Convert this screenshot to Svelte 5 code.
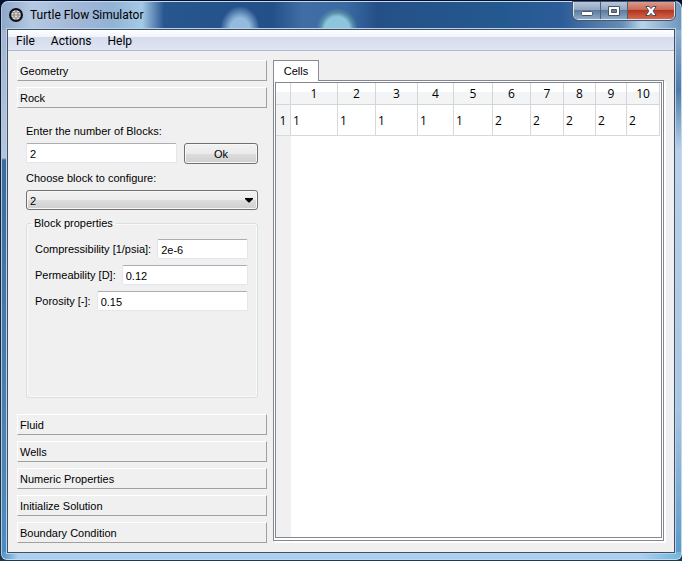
<script>
  let blockCount = $state('2');
  let selected = $state('2');
  let compressibility = $state('2e-6');
  let permeability = $state('0.12');
  let porosity = $state('0.15');
  let open = $state('Rock');

  const before = ['Geometry', 'Rock'];
  const after = ['Fluid', 'Wells', 'Numeric Properties', 'Initialize Solution', 'Boundary Condition'];
  const columns = [
    { width: 47, value: 1 },
    { width: 38, value: 1 },
    { width: 42, value: 1 },
    { width: 36, value: 1 },
    { width: 39, value: 1 },
    { width: 38, value: 2 },
    { width: 33, value: 2 },
    { width: 32, value: 2 },
    { width: 31, value: 2 },
    { width: 33, value: 2 }
  ];
</script>

<div class="desktop">
  <div class="window">
    <header class="titlebar">
      <svg class="logo" viewBox="0 0 14 14" aria-hidden="true">
        <circle cx="7" cy="7" r="7" fill="#111" />
        <circle cx="7" cy="7" r="4.8" fill="#ddd" />
        <path d="M5 4.8 7 3.8 9 4.8V8.8L7 10.2 5 8.8ZM5 4.8 3 4M9 4.8 11 4M5 8.8 3 10M9 8.8 11 10M2 7H12M7 2V4M7 10V12" fill="none" stroke="#555" stroke-width=".6" />
      </svg>
      <h1>Turtle Flow Simulator</h1>
      <div class="caption">
        <button class="min" aria-label="Minimize">
          <svg width="14" height="14" viewBox="0 0 14 14"><rect x="1.5" y="7.5" width="11" height="4" rx="1" fill="#fff" stroke="#4c5365" /></svg>
        </button>
        <button class="max" aria-label="Maximize">
          <svg width="14" height="14" viewBox="0 0 14 14"><path d="M1.5 2.5H12.5V11.5H1.5ZM4.500 5.500H9.500V8.500H4.500Z" fill="#fff" fill-rule="evenodd" stroke="#4c5365" /></svg>
        </button>
        <button class="close" aria-label="Close">
          <svg width="14" height="14" viewBox="0 0 14 14"><path d="M1.800 2.500H5.200L7 4.600 8.800 2.500H12.200L9.100 7 12.200 11.500H8.800L7 9.400 5.200 11.500H1.800L4.900 7Z" fill="#fff" stroke="#4e4d5f" /></svg>
        </button>
      </div>
    </header>

    <div class="client">
      <nav class="menu">
        <button>File</button>
        <button>Actions</button>
        <button>Help</button>
      </nav>

      <main>
        <section class="toolbox">
          {#each before as name}
            <button class="item" onclick={() => (open = name)}>{name}</button>
          {/each}

          <div class="page">
            <label for="count">Enter the number of Blocks:</label>
            <div class="count">
              <input id="count" type="text" bind:value={blockCount} />
              <button class="ok">Ok</button>
            </div>
            <label for="block">Choose block to configure:</label>
            <div class="combo">
              <select id="block" bind:value={selected}>
                <option value="1">1</option>
                <option value="2">2</option>
              </select>
              <svg width="8" height="5" viewBox="0 0 8 5" aria-hidden="true"><path d="M0 0H8V1L4.500 4.500H3.500L0 1Z" fill="#000" /></svg>
            </div>
            <fieldset>
              <legend>Block properties</legend>
              <div class="prop">
                <label for="comp">Compressibility [1/psia]:</label>
                <input id="comp" type="text" bind:value={compressibility} />
              </div>
              <div class="prop">
                <label for="perm">Permeability [D]:</label>
                <input id="perm" type="text" bind:value={permeability} />
              </div>
              <div class="prop">
                <label for="poro">Porosity [-]:</label>
                <input id="poro" type="text" bind:value={porosity} />
              </div>
            </fieldset>
          </div>

          {#each after as name}
            <button class="item" onclick={() => (open = name)}>{name}</button>
          {/each}
        </section>

        <section class="tabs">
          <div role="tablist">
            <button class="tab" role="tab" aria-selected="true">Cells</button>
          </div>
          <div class="pane" role="tabpanel">
            <div class="grid">
              <table>
                <colgroup>
                  <col style:width="15px" />
                  {#each columns as column}
                    <col style:width="{column.width}px" />
                  {/each}
                </colgroup>
                <thead>
                  <tr>
                    <th></th>
                    {#each columns as _, i}
                      <th scope="col">{i + 1}</th>
                    {/each}
                  </tr>
                </thead>
                <tbody>
                  <tr>
                    <th scope="row">1</th>
                    {#each columns as column}
                      <td>{column.value}</td>
                    {/each}
                  </tr>
                </tbody>
              </table>
              <div class="gutter"></div>
            </div>
          </div>
        </section>
      </main>
    </div>
  </div>
</div>

<style>
  :global(body) {
    margin: 0;
  }

  * {
    box-sizing: border-box;
  }

  button,
  input,
  select {
    margin: 0;
    padding: 0;
    font: inherit;
    color: inherit;
  }

  .desktop {
    display: flex;
    min-height: 100vh;
    padding: 1px 0;
    background: linear-gradient(#03102e, #0b2444 30%, #1f3a4a);
    font: 11px/14px "Liberation Sans", Arial, sans-serif;
    color: #000;
  }

  .window {
    flex: 1;
    min-width: 0;
    display: flex;
    flex-direction: column;
    padding: 0 6px 6px 5px;
    border: 1px solid #c3d9ec;
    border-left-color: #b5c8dc;
    border-radius: 7px 7px 6px 6px;
    margin-left: 1px;
    background:
      radial-gradient(ellipse 20px 24px at 238px 28px, #94bbdf 50%, #94bbdf00) no-repeat 0 0 / 100% 28px,
      radial-gradient(ellipse 21px 22px at 335px 28px, #8cc5dc 60%, #5f9aa8aa 80%, #5f9aa800) no-repeat 0 0 / 100% 28px,
      linear-gradient(90deg, #8ea9cb, #b4c9e2 30px, #a5b8d8 70px, #91b3d4 110px, #a5cae5 140px, #28568f 162px, #235089 270px, #406da4 300px, #3b6aa3 345px, #245087 375px, #245990 500px, #2d5d98 560px, #668db5 620px, #b8d4e9 640px, #6f96bc 100%) no-repeat 0 0 / 100% 28px,
      linear-gradient(90deg, #4f94c5, #a9cff5 16px, #a9cff5 94%, #72b5da) no-repeat 0 100% / 100% 7px,
      linear-gradient(#a5b5cf, #b6c5db 128px, #3c6b9c 130px, #4e83b5 420px, #4a90c4) no-repeat 0 28px / 50% 100%,
      linear-gradient(#91afd0, #4e7bab 60px, #b9d1e8 120px, #a8c5e2 380px, #4a91c3) no-repeat 100% 28px / 50% 100%;
  }

  .titlebar {
    display: flex;
    align-items: flex-start;
    height: 27px;
  }

  .logo {
    width: 14px;
    height: 14px;
    margin: 6px 7px 0 2px;
  }

  h1 {
    flex: 1;
    margin: 5px 0 0;
    font: 12px/16px Roboto, sans-serif;
  }

  .caption {
    display: flex;
    height: 18px;
    border: 1px solid #dbe6f0;
    border-top: 0;
    border-radius: 0 0 5px 5px;
    overflow: hidden;
    outline: 1px solid #47546d;
  }

  .caption button {
    display: flex;
    align-items: center;
    justify-content: center;
    width: 27px;
    border: 0;
    border-right: 1px solid #4f6079;
    background: linear-gradient(#b8c7d9, #92a7c1 45%, #5e7b9e 50%, #8da9c6);
  }

  .caption .close {
    width: 46px;
    border: 0;
    background: linear-gradient(#dc9c8d, #c96a55 45%, #b23420 50%, #d4684f);
  }

  .client {
    flex: 1;
    display: flex;
    flex-direction: column;
    border: 1px solid #3f4f66;
    outline: 1px solid #b9d2e8;
    background: #f0f0f0;
  }

  .menu {
    display: flex;
    height: 21px;
    padding-left: 2px;
    border-bottom: 1px solid #b4b9cf;
    background: linear-gradient(#fff, #f0f3fa 7px, #d5dbec 7px, #e0e5f5);
    font: 12px/18px Roboto, sans-serif;
  }

  .menu button {
    padding: 2px 6px 0;
    margin-right: 4px;
    border: 0;
    background: none;
  }

  main {
    flex: 1;
    display: flex;
    gap: 6px;
    padding: 9px 8px 9px 9px;
  }

  .toolbox {
    width: 250px;
    display: flex;
    flex-direction: column;
    gap: 6px;
  }

  .item {
    height: 21px;
    flex: none;
    padding: 1px 2px 0;
    border: 1px solid;
    border-color: #fff #a0a0a0 #a0a0a0 #fff;
    background: #f0f0f0;
    text-align: left;
  }

  .page {
    flex: 1;
    display: flex;
    flex-direction: column;
    padding: 10px 9px;
  }

  .page > label {
    margin-bottom: 5px;
  }

  .count {
    display: flex;
    gap: 7px;
    margin-bottom: 7px;
  }

  input {
    flex: 1;
    min-width: 0;
    height: 20px;
    padding: 1px 3px 0;
    border: 1px solid #e2e6ee;
    border-top-color: #abadb3;
    border-radius: 2px;
    background: #fff;
  }

  .ok {
    width: 74px;
    height: 21px;
  }

  .ok,
  select {
    border: 1px solid #707070;
    border-radius: 3px;
    background: linear-gradient(#f2f2f2, #ebebeb 50%, #dddddd 50%, #cfcfcf);
    box-shadow: inset 0 0 0 1px #f8f8f8;
  }

  .combo {
    position: relative;
    margin-bottom: 6px;
  }

  select {
    display: block;
    appearance: none;
    width: 100%;
    height: 20px;
    padding: 1px 3px 0;
  }

  .combo svg {
    position: absolute;
    top: 8px;
    right: 5px;
    pointer-events: none;
  }

  fieldset {
    flex: 1;
    min-width: 0;
    margin: 0;
    padding: 9px 9px 9px 8px;
    border: 1px solid #d5dfe5;
    border-radius: 3px;
    box-shadow: inset 0 0 0 1px #fafafa;
  }

  legend {
    margin-left: -4px;
    padding: 0 3px;
  }

  .prop {
    display: flex;
    align-items: center;
    gap: 6px;
    margin-bottom: 6px;
  }

  .tabs {
    flex: 1;
    min-width: 0;
    display: flex;
    flex-direction: column;
  }

  .tab {
    display: block;
    position: relative;
    width: 46px;
    height: 21px;
    margin-bottom: -1px;
    border: 1px solid #898c95;
    border-bottom: 0;
    background: #fff;
  }

  .pane {
    flex: 1;
    display: flex;
    padding: 1px 1px 2px;
    border: 1px solid #828790;
    background: #fff;
    box-shadow: 2px 2px #fff;
    margin: 0 2px 2px 0;
  }

  .grid {
    flex: 1;
    min-width: 0;
    display: flex;
    flex-direction: column;
    border: 1px solid #828790;
  }

  table {
    width: 384px;
    table-layout: fixed;
    border-collapse: separate;
    border-spacing: 0;
    font: 12px/16px "Open Sans", sans-serif;
  }

  th,
  td {
    padding: 1px 0 0;
    border: 0 solid #d8d8d8;
    border-width: 0 1px 1px 0;
    font-weight: normal;
  }

  thead th {
    height: 22px;
    border-color: #d5d5d5;
    background: linear-gradient(#fff 45%, #f3f4f6 45%, #f3f4f6);
  }

  tbody th {
    background: #f3f4f6;
  }

  td {
    height: 31px;
    padding-left: 2px;
    text-align: left;
  }

  .gutter {
    flex: 1;
    width: 15px;
    background: #f0f0f0;
  }
</style>
